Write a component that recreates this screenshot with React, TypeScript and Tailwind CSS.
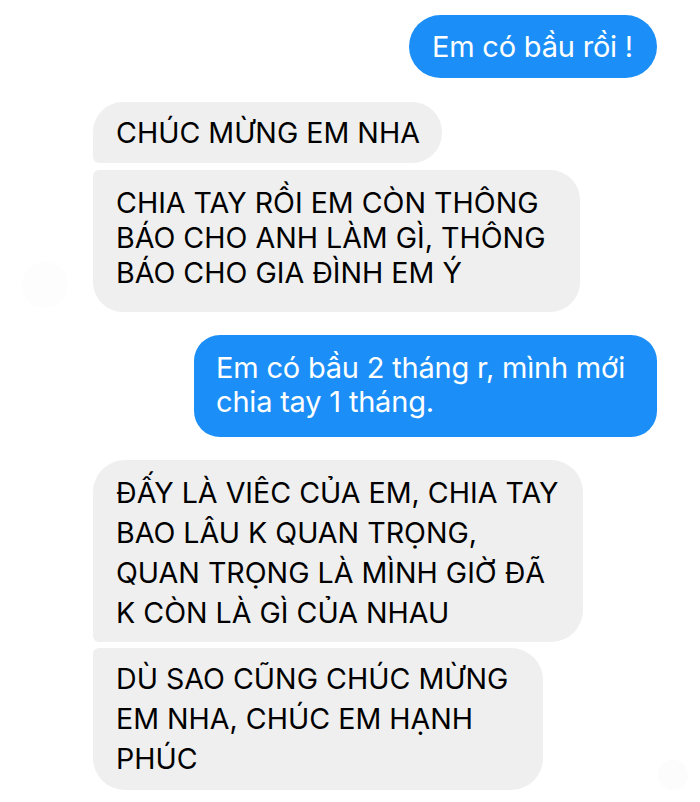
import React from "react";

const font = { fontFamily: "Inter, 'Noto Sans', 'Liberation Sans', sans-serif" };

export default function App() {
  return (
    <div className="relative w-[700px] h-[802px] bg-white overflow-hidden" style={font}>
      {/* faint avatar ghosts */}
      <div className="absolute left-[22px] top-[262px] w-[46px] h-[46px] rounded-full bg-[#fdfdfd]" />
      <div className="absolute left-[658px] top-[760px] w-[30px] h-[30px] rounded-full bg-[#fcfcfc]" />

      <div className="relative flex flex-col pt-[15px]">
        <div className="flex justify-end pr-[43px]">
          <div className="bg-[#1b8ff7] text-white rounded-full pl-[23px] pr-[24px] h-[63px] flex items-center text-[29px] leading-[36px] tracking-[-0.2px]">
            Em có bầu rồi !
          </div>
        </div>

        <div className="flex pl-[93px] mt-[24px]">
          <div className="bg-[#efefef] text-black rounded-tl-[30px] rounded-tr-[30px] rounded-br-[30px] rounded-bl-[6px] pl-[23px] pr-[22px] h-[61px] flex items-center text-[28.6px] leading-[35px]">
            CHÚC MỪNG EM NHA
          </div>
        </div>

        <div className="flex pl-[93px] mt-[7px]">
          <div className="bg-[#efefef] text-black rounded-tl-[6px] rounded-tr-[30px] rounded-br-[30px] rounded-bl-[30px] pl-[23px] pr-[35px] pt-[15px] pb-[22px] text-[28.6px] leading-[35px]">
            CHIA TAY RỒI EM CÒN THÔNG
            <br />
            BÁO CHO ANH LÀM GÌ, THÔNG
            <br />
            BÁO CHO GIA ĐÌNH EM Ý
          </div>
        </div>

        <div className="flex justify-end pr-[43px] mt-[23px]">
          <div className="bg-[#1b8ff7] text-white rounded-[26px] pl-[22px] pr-[32px] pt-[16px] pb-[18px] text-[29px] leading-[34px] tracking-[-0.2px]">
            Em có bầu 2 tháng r, mình mới
            <br />
            chia tay 1 tháng.
          </div>
        </div>

        <div className="flex pl-[93px] mt-[23px]">
          <div className="bg-[#efefef] text-black rounded-tl-[32px] rounded-tr-[32px] rounded-br-[32px] rounded-bl-[6px] pl-[23px] pr-[25px] pt-[13px] pb-[9px] text-[28.6px] leading-[40px]">
            ĐẤY LÀ VIÊC CỦA EM, CHIA TAY
            <br />
            BAO LÂU K QUAN TRỌNG,
            <br />
            QUAN TRỌNG LÀ MÌNH GIỜ ĐÃ
            <br />
            K CÒN LÀ GÌ CỦA NHAU
          </div>
        </div>

        <div className="flex pl-[93px] mt-[6px]">
          <div className="bg-[#efefef] text-black rounded-tl-[6px] rounded-tr-[32px] rounded-br-[32px] rounded-bl-[32px] pl-[23px] pr-[35px] pt-[11px] pb-[11px] text-[28.6px] leading-[40px]">
            DÙ SAO CŨNG CHÚC MỪNG
            <br />
            EM NHA, CHÚC EM HẠNH
            <br />
            PHÚC
          </div>
        </div>
      </div>
    </div>
  );
}
